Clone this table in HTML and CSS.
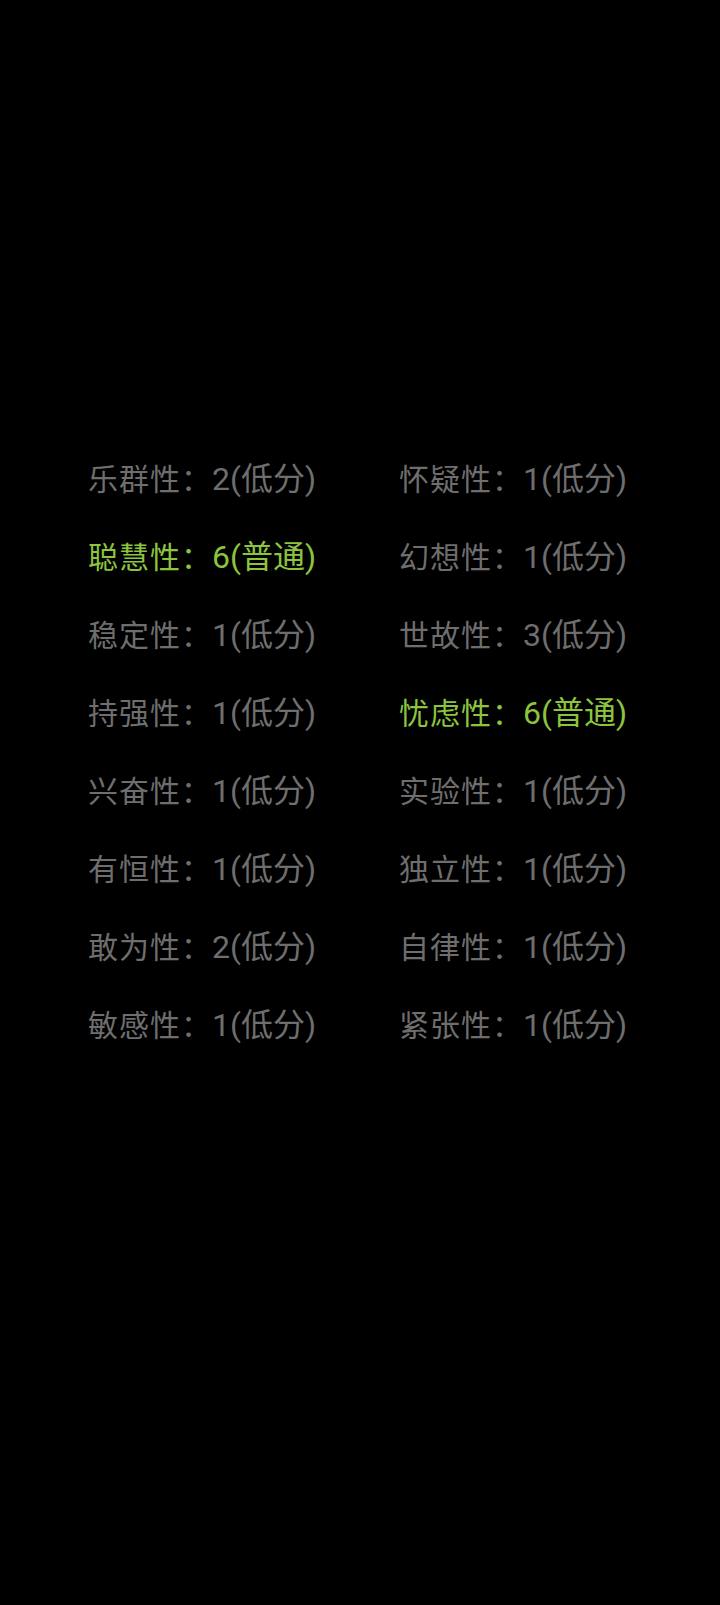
FILE: index.html
```html
<!DOCTYPE html>
<html lang="zh-CN">
  <head>
    <meta charset="UTF-8">
    <meta name="viewport" content="width=device-width, initial-scale=1.0">
    <title>16PF</title>
    <link rel="stylesheet" href="styles.css">
  </head>
<body>
  <div class="resultados">
    <div class="factor"><span class="nombre">乐群性：</span><span class="valor">2(低分)</span></div>
    <div class="factor"><span class="nombre">怀疑性：</span><span class="valor">1(低分)</span></div>
    <div class="factor normal"><span class="nombre">聪慧性：</span><span class="valor">6(普通)</span></div>
    <div class="factor"><span class="nombre">幻想性：</span><span class="valor">1(低分)</span></div>
    <div class="factor"><span class="nombre">稳定性：</span><span class="valor">1(低分)</span></div>
    <div class="factor"><span class="nombre">世故性：</span><span class="valor">3(低分)</span></div>
    <div class="factor"><span class="nombre">持强性：</span><span class="valor">1(低分)</span></div>
    <div class="factor normal"><span class="nombre">忧虑性：</span><span class="valor">6(普通)</span></div>
    <div class="factor"><span class="nombre">兴奋性：</span><span class="valor">1(低分)</span></div>
    <div class="factor"><span class="nombre">实验性：</span><span class="valor">1(低分)</span></div>
    <div class="factor"><span class="nombre">有恒性：</span><span class="valor">1(低分)</span></div>
    <div class="factor"><span class="nombre">独立性：</span><span class="valor">1(低分)</span></div>
    <div class="factor"><span class="nombre">敢为性：</span><span class="valor">2(低分)</span></div>
    <div class="factor"><span class="nombre">自律性：</span><span class="valor">1(低分)</span></div>
    <div class="factor"><span class="nombre">敏感性：</span><span class="valor">1(低分)</span></div>
    <div class="factor"><span class="nombre">紧张性：</span><span class="valor">1(低分)</span></div>
  </div>
</body>
</html>
```

FILE: styles.css
```css
:root {
  --color-fondo: #000;
  --color-bajo: #6e6e6e;
  --color-normal: #8cc43e;
}

body {
  margin: 0;
  background-color: var(--color-fondo);
  font-family: Roboto, "Noto Sans CJK SC", sans-serif;
  min-height: 1605px;
}

.resultados {
  display: grid;
  grid-template-columns: 311px 1fr;
  padding: 438px 0 0 88px;
}

.factor {
  height: 78px;
  line-height: 78px;
  font-size: 30px;
  color: var(--color-bajo);
  white-space: nowrap;
}

.nombre {
  font-family: "Noto Sans CJK SC", sans-serif;
  letter-spacing: 1px;
}

.valor {
  font-size: 32px;
}

.factor.normal {
  color: var(--color-normal);
}
```
